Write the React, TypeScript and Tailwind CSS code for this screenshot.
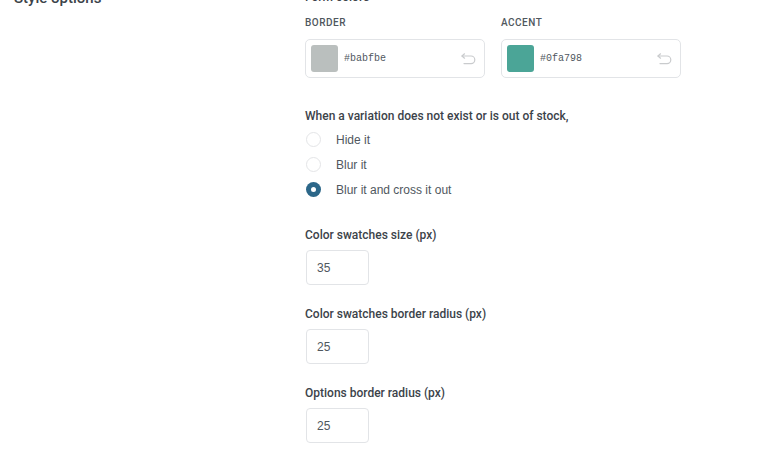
import { ReactNode } from "react"

const font = { fontFamily: '"Liberation Sans", Arial, sans-serif' }
const heading = { fontFamily: 'Roboto, "Liberation Sans", Arial, sans-serif' }

function UndoIcon() {
  return (
    <svg width="16" height="12" viewBox="0 0 16 12" fill="none" stroke="#c9cbcd" strokeWidth="1.2" strokeLinecap="round" strokeLinejoin="round">
      <path d="M2 3 H11 a3.8 3.8 0 0 1 0 7.6 H4" />
      <path d="M4.5 0.8 L2 3 L4.5 5.2" />
    </svg>
  )
}

function ColorField({ label, color, hex }: { label: string; color: string; hex: string }) {
  return (
    <div className="w-[180px]">
      <div className="text-[10px] leading-[14px] font-medium tracking-[0.05em] text-[#50575e]" style={heading}>
        {label}
      </div>
      <div className="mt-[9px] h-[39px] rounded-[5px] border border-[#e2e4e7] flex items-center pl-[5px] pr-[8px]">
        <div className="w-[27px] h-[27px] rounded-[3px]" style={{ backgroundColor: color }} />
        <span className="ml-[6px] text-[10px] text-[#50575e]" style={{ fontFamily: '"Liberation Mono", "DejaVu Sans Mono", monospace' }}>
          {hex}
        </span>
        <span className="ml-auto flex items-center">
          <UndoIcon />
        </span>
      </div>
    </div>
  )
}

function Radio({ checked, children }: { checked?: boolean; children: ReactNode }) {
  return (
    <div className="h-[25px] flex items-center">
      {checked ? (
        <span className="w-[15px] h-[15px] rounded-full bg-[#2c6789] flex items-center justify-center ml-[1px]">
          <span className="w-[5px] h-[5px] rounded-full bg-white" />
        </span>
      ) : (
        <span className="w-[15px] h-[15px] rounded-full border border-[#e4e5e7] ml-[1px]" />
      )}
      <span className="ml-[15px] text-[12px] text-[#50575e]">{children}</span>
    </div>
  )
}

function NumberField({ label, value, first }: { label: string; value: string; first?: boolean }) {
  return (
    <div className={first ? "mt-[24px]" : "mt-[20px]"}>
      <div className="text-[12px] leading-[18px] font-medium text-[#3c434a]" style={heading}>
        {label}
      </div>
      <div className="mt-[6px] ml-[1px] w-[63px] h-[35px] rounded-[4px] border border-[#e2e4e7] flex items-center pl-[10px] text-[12px] text-[#50575e]">
        {value}
      </div>
    </div>
  )
}

export default function App() {
  return (
    <div className="w-[769px] h-[452px] overflow-hidden bg-white flex" style={font}>
      <div className="w-[305px] pl-[14px]">
        <div className="-mt-[12px] text-[15px] leading-[20px] font-medium text-[#3c434a]" style={heading}>
          Style options
        </div>
      </div>
      <div className="flex-1">
        <div className="-mt-[12px] text-[12px] leading-[18px] font-medium text-[#3c434a]" style={heading}>
          Form colors
        </div>
        <div className="mt-[10px] flex gap-[16px]">
          <ColorField label="BORDER" color="#babfbe" hex="#babfbe" />
          <ColorField label="ACCENT" color="#4ba597" hex="#0fa798" />
        </div>

        <div className="mt-[29px] text-[12px] leading-[18px] font-medium text-[#3c434a]" style={heading}>
          When a variation does not exist or is out of stock,
        </div>
        <div className="mt-[2px]">
          <Radio>Hide it</Radio>
          <Radio>Blur it</Radio>
          <Radio checked>Blur it and cross it out</Radio>
        </div>

        <NumberField first label="Color swatches size (px)" value="35" />
        <NumberField label="Color swatches border radius (px)" value="25" />
        <NumberField label="Options border radius (px)" value="25" />
      </div>
    </div>
  )
}
